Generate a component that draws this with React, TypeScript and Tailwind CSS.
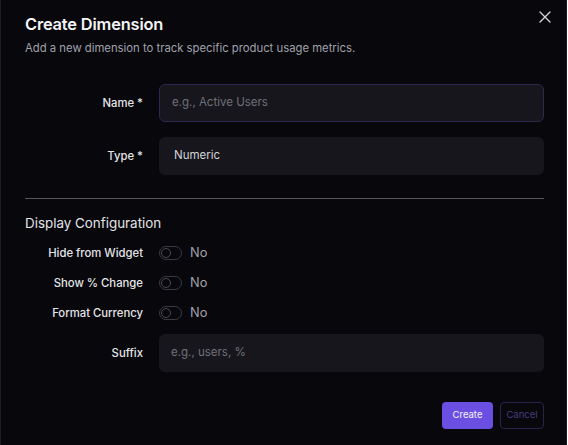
import { X } from "lucide-react";

const labelCls =
  "w-[118px] shrink-0 text-right text-[11.3px] font-medium text-[#e4e4e7]";

function Toggle() {
  return (
    <div className="flex items-center gap-[8px]">
      <span className="flex h-[14px] w-[23px] items-center rounded-full border border-[#3a3a42] px-[1px]">
        <span className="h-[10px] w-[10px] rounded-full border border-[#4a4a52]" />
      </span>
      <span className="text-[12.8px] text-[#a1a1aa]">No</span>
    </div>
  );
}

const TOGGLES = ["Hide from Widget", "Show % Change", "Format Currency"];

export default function App() {
  return (
    <div
      className="relative h-[445px] w-[567px] border-x border-[#1d1d24] bg-[#07070c] pl-6 pr-[22px] pt-[12px]"
      style={{ fontFamily: "Inter, 'Noto Sans', sans-serif" }}
    >
      <button className="absolute left-[534px] top-[7px] text-[#d4d4d8]">
        <X size={20} strokeWidth={1.6} />
      </button>

      <h1 className="text-[16.4px] font-semibold leading-[24px] tracking-[-0.01em] text-[#f4f4f5]">
        Create Dimension
      </h1>
      <p className="mt-[3px] text-[11.3px] leading-[18px] text-[#a1a1aa]">
        Add a new dimension to track specific product usage metrics.
      </p>

      {/* Basic fields */}
      <div className="mt-[27px] space-y-[15px]">
        <div className="flex items-center gap-4">
          <label className={labelCls}>Name *</label>
          <div className="flex h-[38px] flex-1 items-center rounded-md border border-[#2c2950] bg-[#16161c] px-3 text-[11.5px] text-[#71717a]">
            e.g., Active Users
          </div>
        </div>
        <div className="flex items-center gap-4">
          <label className={labelCls}>Type *</label>
          <div className="flex h-[38px] flex-1 items-center rounded-md bg-[#16161c] px-[15px] text-[11.5px] text-[#d4d4d8]">
            Numeric
          </div>
        </div>
      </div>

      <div className="mt-[23px] h-px bg-[#55555c]" />

      {/* Display config */}
      <h2 className="mt-[14px] text-[13.4px] leading-[20px] text-[#e4e4e7]">
        Display Configuration
      </h2>
      <div className="mt-[12px] space-y-[14px]">
        {TOGGLES.map((t) => (
          <div key={t} className="flex h-[16px] items-center gap-4">
            <label className={labelCls}>{t}</label>
            <Toggle />
          </div>
        ))}
      </div>

      <div className="mt-[13px] flex items-center gap-4">
        <label className={labelCls}>Suffix</label>
        <div className="flex h-[38px] flex-1 items-center rounded-md bg-[#16161c] px-3 text-[11.5px] text-[#71717a]">
          e.g., users, %
        </div>
      </div>

      <div className="mt-[30px] flex justify-end gap-[7px]">
        <button className="h-[27px] w-[51px] rounded-[4px] bg-[#6b4fe3] text-[9.5px] text-[#f4f4f5]">
          Create
        </button>
        <button className="h-[27px] w-[44px] rounded-[4px] border border-[#27234a] text-[9.5px] text-[#463d7e]">
          Cancel
        </button>
      </div>
    </div>
  );
}
